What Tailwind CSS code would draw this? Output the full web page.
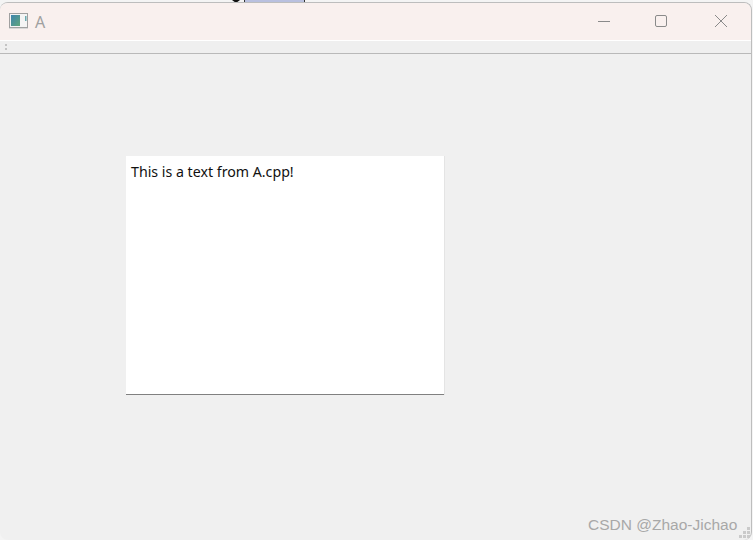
<!DOCTYPE html>
<html lang="en">
<head>
    <meta charset="UTF-8">
    <title>A</title>
    <script src="https://cdn.jsdelivr.net/npm/@tailwindcss/browser@4"></script>
</head>
<body class="bg-white">
<div class="relative w-[753px] h-[540px] overflow-hidden bg-[#f4f4f4] font-['Noto_Sans',sans-serif]">

    <!-- Desktop peeking above the window -->
    <svg class="absolute left-[231px] top-0" width="10" height="3" viewBox="0 0 10 3"><path d="M1 0h8L5 3z" fill="#111"/></svg>
    <div class="absolute left-[244px] top-0 w-[61px] h-[3px] bg-[#b9c0df] border-x border-[#333]"></div>

    <!-- Window -->
    <div class="relative flex flex-col w-[752px] h-[538px] mt-[2px] border-r border-t border-[#bdbdbd] rounded-[8px] overflow-hidden bg-[#f0f0f0]">

        <!-- Title bar -->
        <div class="flex items-center h-[38px] shrink-0 bg-[#f9f0ee] border-b border-white">
            <svg class="ml-[9px] -mt-[2px]" width="20" height="16" viewBox="0 0 20 16">
                <defs>
                    <linearGradient id="ico" x1="0" y1="0" x2="1" y2="1">
                        <stop offset="0" stop-color="#3f84ad"/>
                        <stop offset="1" stop-color="#5fa57c"/>
                    </linearGradient>
                </defs>
                <rect x="0.5" y="0.5" width="18" height="14" fill="#f4f4f4" stroke="#a0a0a0"/>
                <rect x="2" y="2" width="9" height="11" fill="url(#ico)"/>
                <rect x="16" y="3" width="1.5" height="5" fill="#6aaab0"/>
                <path d="M0 15.5h19" stroke="#d8d8d8"/>
            </svg>
            <span class="ml-[6px] text-[16px] leading-none text-[#a0a0a0]">A</span>
            <div class="ml-auto flex items-center -mt-[2px]">
                <svg class="mr-[41px]" width="14" height="14" viewBox="0 0 14 14"><path d="M0 7.5h12" stroke="#8a8a8a"/></svg>
                <svg class="mr-[47px]" width="14" height="14" viewBox="0 0 14 14"><rect x="2.5" y="1.5" width="11" height="11" rx="1.5" fill="none" stroke="#8a8a8a"/></svg>
                <svg class="mr-[23px]" width="14" height="14" viewBox="0 0 14 14"><path d="M1 1l12 12M13 1L1 13" stroke="#8a8a8a"/></svg>
            </div>
        </div>

        <!-- Toolbar -->
        <div class="flex items-center h-[13px] shrink-0 bg-[#efefef] border-b border-[#b9b9b9]">
            <svg class="ml-[5px]" width="2" height="6" viewBox="0 0 2 6"><path d="M0 0h2v2H0zM0 4h2v2H0z" fill="#c4c4c4"/></svg>
        </div>

        <!-- Central widget -->
        <div class="flex-1 pl-[126px] pt-[102px]">
            <div class="w-[318px] h-[239px] bg-white border-b border-[#808080] shadow-[1px_0_0_#e4e4e4] pl-[5px] pt-[5px] text-[14.2px] leading-[22px] text-[#111]">This is a text from A.cpp!</div>
        </div>
    </div>

    <!-- Size grip -->
    <svg class="absolute right-[3px] bottom-[2px]" width="11" height="11" viewBox="0 0 11 11">
        <path d="M8 0h3v3H8zM4 4h3v3H4zM8 4h3v3H8zM0 8h3v3H0zM4 8h3v3H4zM8 8h3v3H8z" fill="#cacaca"/>
    </svg>

    <!-- Watermark -->
    <span class="absolute left-[588px] top-[515px] text-[15.5px] leading-[20px] font-['Liberation_Sans',sans-serif] text-[#a8a8a8]">CSDN @Zhao-Jichao</span>
</div>
</body>
</html>
